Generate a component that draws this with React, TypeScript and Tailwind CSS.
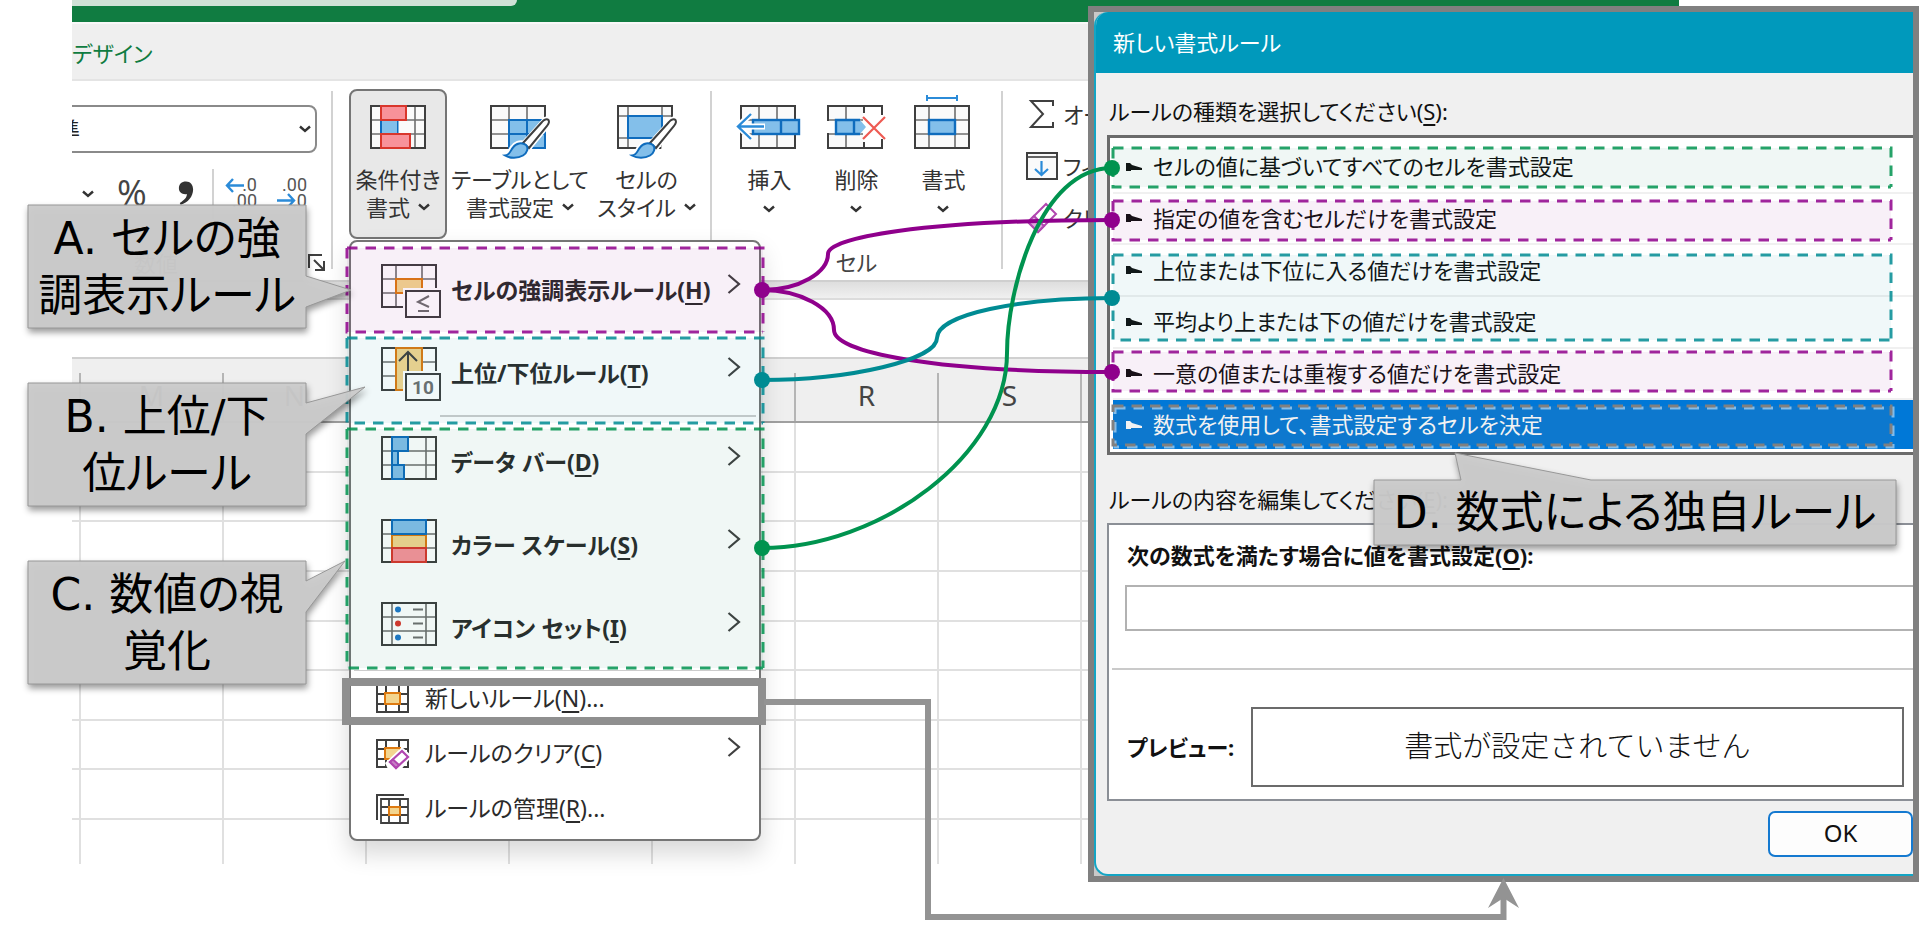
import type { ReactNode } from "react";

const UI = "font-['Noto_Sans','Noto_Sans_CJK_JP',sans-serif] [font-feature-settings:'palt']";

const DARK = "#3f3f3f";
const MID = "#6f6f6f";
const BLUE = "#0f6cbd";
const SKY = "#83bfea";
const ORANGE = "#de7a10";
const SAND = "#f3d58f";
const RED = "#d9362c";
const PINK = "#f8929a";

function Down() {
  return (
    <svg width="12" height="8" viewBox="0 0 12 8" fill="none" className="inline-block shrink-0">
      <path d="M1 1.500 6 6 11 1.500" stroke="#333" strokeWidth="2.400" />
    </svg>
  );
}

function Right() {
  return (
    <svg width="14" height="34" viewBox="0 0 14 34" fill="none" className="shrink-0">
      <path d="M1.500 1 12 10 1.500 19" stroke="#404040" strokeWidth="2.200" />
    </svg>
  );
}

function Icon({ children, h = 54 }: { children: ReactNode; h?: number }) {
  return (
    <svg width="60" height={h} viewBox={`0 0 60 ${h}`} fill="none" className="shrink-0 overflow-visible">
      {children}
    </svg>
  );
}

function Grid({ cols, fill = "#fafafa" }: { cols: number[]; fill?: string }) {
  return (
    <g>
      <rect x="1" y="1" width="54" height="42" fill={fill} />
      <path d={"M1 15H55M1 29H55" + cols.map((c) => `M${c} 1V43`).join("")} stroke={MID} strokeWidth="1.600" />
      <rect x="1" y="1" width="54" height="42" stroke={DARK} strokeWidth="2" />
    </g>
  );
}

function Brush() {
  return (
    <g>
      <path d="M57 14C60 15 59 18 57 21L40 42C38 50 26 54 14 51C20 50 20 46 22 43C25 38 30 37 34 38L53 17C54 15 56 14 57 14Z" fill="#fff" stroke="#fff" strokeWidth="5" />
      <path d="M33 38 52 17C54 14.500 57 13.500 58.500 15C59.500 16.500 58.500 19 57 21L39 43Z" fill="#fff" stroke={DARK} strokeWidth="2" />
      <path d="M15 50.500C20 50 20 46 23 42.500C26 38 32 37 36 40C39 43 37 48 33 50.500C28 53.500 20 53.500 15 50.500Z" fill={SKY} stroke={BLUE} strokeWidth="2" />
    </g>
  );
}

const ConditionalIcon = () => (
  <Icon>
    <g transform="translate(2 0)">
      <Grid cols={[11, 45]} />
      <rect x="11" y="1" width="25" height="14" fill={PINK} stroke={RED} strokeWidth="2" />
      <rect x="11" y="29" width="29" height="14" fill={PINK} stroke={RED} strokeWidth="2" />
      <rect x="28" y="16" width="16" height="12" fill="#fafafa" />
      <path d="M11 16V28M27.500 16V28" stroke={BLUE} strokeWidth="2" />
      <rect x="12" y="16" width="15" height="12" fill={SKY} />
    </g>
  </Icon>
);

const TableIcon = () => (
  <Icon>
    <Grid cols={[19, 37]} />
    <path d="M19 15H55V43H19Z" fill={SKY} stroke={BLUE} strokeWidth="2" />
    <path d="M19 29H55M37 15V43" stroke={BLUE} strokeWidth="2" />
    <Brush />
  </Icon>
);

const StyleIcon = () => (
  <Icon>
    <rect x="1" y="1" width="54" height="42" fill="#fafafa" />
    <path d="M1 11H55M1 33H55M11 1V43M45 1V43" stroke={MID} strokeWidth="1.600" />
    <rect x="1" y="1" width="54" height="42" stroke={DARK} strokeWidth="2" />
    <rect x="11" y="11" width="34" height="22" fill={SKY} stroke={BLUE} strokeWidth="2" />
    <path d="M48 13H58V46H44Z" fill="#fff" />
    <Brush />
  </Icon>
);

const InsertIcon = () => (
  <Icon>
    <Grid cols={[19, 37]} />
    <rect x="13" y="15" width="46" height="14" fill={SKY} stroke={BLUE} strokeWidth="2.400" />
    <path d="M41 15V29" stroke={BLUE} strokeWidth="2.400" />
    <path d="M11 9-2 21 11 34M-2 21.500H25" stroke="#fff" strokeWidth="6" />
    <path d="M11 9-2 21.500 11 34M-2 21.500H24" stroke="#2b8bd8" strokeWidth="2.400" />
  </Icon>
);

const DeleteIcon = () => (
  <Icon>
    <Grid cols={[19, 37]} />
    <path d="M-1 16H10V28H-1Z" fill="#fff" />
    <path d="M36 0H60V44H36Z" fill="#fff" />
    <path d="M36 1H55V10M36 43H55V34M37 1V8M37 43V37" stroke={DARK} strokeWidth="2" />
    <path d="M9 15H33L39 22 33 29H9Z" fill={SKY} />
    <path d="M33 15H9V29H33M27 15V29" stroke={BLUE} strokeWidth="2.400" />
    <path d="M36 12 58 34M58 12 36 34" stroke="#ee5a52" strokeWidth="2.200" />
  </Icon>
);

const FormatIcon = () => (
  <Icon>
    <Grid cols={[15, 41]} />
    <rect x="15" y="15" width="26" height="14" fill={SKY} stroke={BLUE} strokeWidth="2.400" />
    <path d="M13-7H43M13-10V-4M43-10V-4" stroke="#2b8bd8" strokeWidth="2" />
  </Icon>
);

const HighlightIcon = () => (
  <Icon>
    <Grid cols={[15, 41]} fill="none" />
    <rect x="15" y="15" width="26" height="14" fill={SAND} stroke={ORANGE} strokeWidth="2" />
    <rect x="22" y="24" width="40" height="32" fill="#ffffff" />
    <rect x="25" y="27" width="34" height="26" fill="#ffffff" stroke={DARK} strokeWidth="2" />
    <path d="M48 32 37 38 48 43M37 47H48" stroke={MID} strokeWidth="2" />
  </Icon>
);

const TopIcon = () => (
  <Icon>
    <Grid cols={[15, 41]} fill="none" />
    <rect x="15" y="1" width="26" height="42" fill={SAND} stroke={ORANGE} strokeWidth="2" />
    <path d="M18 14 27 5 36 14M27 6V26" stroke={DARK} strokeWidth="2" />
    <rect x="22" y="24" width="40" height="32" fill="#ffffff" />
    <rect x="25" y="27" width="34" height="26" fill="#ffffff" stroke={DARK} strokeWidth="2" />
    <text x="42" y="47" textAnchor="middle" fontSize="19" fill={MID} fontFamily="Roboto, sans-serif">10</text>
  </Icon>
);

const BarIcon = () => (
  <Icon>
    <Grid cols={[11, 45]} fill="none" />
    <path d="M11 1H27V15H17V29H23V43H11Z" fill={SKY} stroke={BLUE} strokeWidth="2" />
    <path d="M11 15H17M11 29H17" stroke={BLUE} strokeWidth="2" />
  </Icon>
);

const ScaleIcon = () => (
  <Icon>
    <Grid cols={[11, 45]} fill="none" />
    <rect x="11" y="16" width="34" height="13" fill={SAND} stroke={ORANGE} strokeWidth="2" />
    <rect x="11" y="1" width="34" height="14" fill={SKY} stroke={BLUE} strokeWidth="2" />
    <rect x="11" y="29" width="34" height="14" fill={PINK} stroke={RED} strokeWidth="2" />
  </Icon>
);

const SetIcon = () => (
  <Icon>
    <Grid cols={[11, 45]} fill="none" />
    <circle cx="17" cy="7.500" r="3" fill="#1f78c8" />
    <circle cx="17" cy="21.500" r="3" fill={RED} />
    <circle cx="17" cy="35.500" r="3" fill="#1f78c8" />
    <path d="M32 7.500H42M32 21.500H42M32 35.500H42" stroke={MID} strokeWidth="1.800" />
  </Icon>
);

function SmallGrid({ children }: { children: ReactNode }) {
  return (
    <svg width="34" height="30" viewBox="0 0 34 30" fill="none" className="shrink-0 overflow-visible">
      {children}
    </svg>
  );
}

const NewRuleIcon = () => (
  <SmallGrid>
    <path d="M1 1H32V28H1ZM10 1V28M23 1V28M1 10H32M1 20H32" stroke={DARK} strokeWidth="2" />
    <rect x="9" y="9" width="15" height="11" fill={SAND} stroke={ORANGE} strokeWidth="2" />
  </SmallGrid>
);

const ClearRuleIcon = () => (
  <SmallGrid>
    <path d="M1 1H32V28H1ZM10 1V28M23 1V28M1 10H32M1 20H32" stroke={DARK} strokeWidth="2" />
    <rect x="9" y="9" width="15" height="11" fill={SAND} stroke={ORANGE} strokeWidth="2" />
    <path d="M26 8 36 17 24 32H13L9 24Z" fill="#fff" />
    <path d="M26 12 32 18 20 29 14 23Z" stroke="#b146b0" strokeWidth="2.200" />
    <path d="M17 20.500 14 23 20 29 23 26Z" fill="#c77fc6" stroke="#b146b0" strokeWidth="2" />
  </SmallGrid>
);

const ManageRuleIcon = () => (
  <SmallGrid>
    <path d="M1 26V1H28" stroke={DARK} strokeWidth="2" />
    <path d="M5 5H32V29H5ZM13 5V29M24 5V29M5 13H32M5 21H32" stroke={DARK} strokeWidth="1.800" />
    <rect x="13" y="13" width="11" height="8" fill={SAND} stroke={ORANGE} strokeWidth="2" />
  </SmallGrid>
);

function RibbonButton({
  icon,
  lines,
  inline,
  className,
}: {
  icon: ReactNode;
  lines: [string, string?];
  inline?: boolean;
  className: string;
}) {
  return (
    <button className={"flex h-[150px] flex-col items-center gap-[6px] pt-[14px] text-[22px] leading-[28px] whitespace-nowrap text-[#333] " + className}>
      {icon}
      <span className="flex flex-col items-center">
        <span>{lines[0]}</span>
        <span className={"flex h-[28px] items-center gap-2" + (inline ? "" : " pt-1")}>
          {lines[1]}
          <Down />
        </span>
      </span>
    </button>
  );
}

function Separator() {
  return <div className="mt-[2px] h-[178px] w-[2px] shrink-0 bg-[#d2d2d2]" />;
}

function Ribbon() {
  return (
    <div className="flex h-[201px] items-start border-b-2 border-[#cfcfcf] bg-white pt-[8px]">
      <div className="flex w-[259px] shrink-0 flex-col overflow-hidden pt-[16px]">
        <div className="relative -ml-[48px] w-[293px]">
          <select aria-label="表示形式" className="h-[48px] w-full appearance-none rounded-lg border-2 border-[#8a8a8a] bg-white pl-[10px] text-[22px] text-[#222]">
            <option>標準</option>
          </select>
          <span className="pointer-events-none absolute top-[10px] right-[6px]"><Down /></span>
        </div>
        <div className="flex h-[66px] items-start pt-[16px] pl-[6px] text-[#444]">
          <button aria-label="通貨" className="flex h-[50px] w-[20px] items-center justify-center"><Down /></button>
          <button className="ml-[16px] w-[36px] text-center font-['Open_Sans',sans-serif] text-[36px] leading-[48px]">%</button>
          <button aria-label="桁区切り" className="ml-[26px] flex h-[50px] w-[20px] items-center justify-center">
            <svg width="16" height="26" viewBox="0 0 18 28"><path d="M9 0C14 0 17 4 17 9C17 17 11 24 3 26L2 24C7 21 10 18 10 14C5 15 1 12 1 7.500C1 3 4 0 9 0Z" fill="#333" /></svg>
          </button>
          <div className="ml-[16px] h-[50px] w-[2px] bg-[#d2d2d2]" />
          <button aria-label="小数点以下の表示桁数を増やす" className="ml-[10px]">
            <svg width="34" height="42" viewBox="0 0 34 42" fill="none" fontFamily="Roboto, sans-serif" fontSize="18">
              <path d="M9 10 3 16.500 9 23M3 16.500H20" stroke="#2b8bd8" strokeWidth="2.400" />
              <text x="33" y="22" textAnchor="end" fill="#555">.0</text>
              <text x="33" y="38" textAnchor="end" fill="#555">.00</text>
            </svg>
          </button>
          <button aria-label="小数点以下の表示桁数を減らす" className="ml-[16px]">
            <svg width="34" height="42" viewBox="0 0 34 42" fill="none" fontFamily="Roboto, sans-serif" fontSize="18">
              <path d="M14 25 20 31.500 14 38M3 31.500H20" stroke="#2b8bd8" strokeWidth="2.400" />
              <text x="33" y="22" textAnchor="end" fill="#555">.00</text>
              <text x="33" y="38" textAnchor="end" fill="#555">.0</text>
            </svg>
          </button>
        </div>
        <div className="flex items-center justify-between pt-[24px] pr-[5px] pl-[62px] text-[22px] leading-[40px] text-[#555]">
          数値
          <svg width="18" height="18" viewBox="0 0 18 18" fill="none"><path d="M1 14V1H14M6 6 15 15M16 7V16H7" stroke={DARK} strokeWidth="2" /></svg>
        </div>
      </div>
      <Separator />
      <div className="flex pr-[10px] pl-[16px]">
        <RibbonButton icon={<ConditionalIcon />} lines={["条件付き", "書式"]} inline className="w-[98px] rounded-lg border-2 border-[#757575] bg-[#e8e8e8]" />
        <RibbonButton icon={<TableIcon />} lines={["テーブルとして", "書式設定"]} inline className="w-[146px] border-2 border-transparent" />
        <RibbonButton icon={<StyleIcon />} lines={["セルの", "スタイル"]} inline className="w-[107px] border-2 border-transparent" />
      </div>
      <Separator />
      <div className="flex flex-col items-center px-[14px]">
        <div className="flex">
          <RibbonButton icon={<InsertIcon />} lines={["挿入"]} className="w-[87px] border-2 border-transparent" />
          <RibbonButton icon={<DeleteIcon />} lines={["削除"]} className="w-[87px] border-2 border-transparent" />
          <RibbonButton icon={<FormatIcon />} lines={["書式"]} className="w-[87px] border-2 border-transparent" />
        </div>
        <div className="pt-[8px] text-[22px] leading-[30px] text-[#444]">セル</div>
      </div>
      <Separator />
      <div className="flex flex-col gap-[12px] pt-[5px] pl-[23px] text-[22px] leading-[40px] whitespace-nowrap text-[#333]">
        <button className="flex items-center gap-[5px]">
          <svg width="32" height="32" viewBox="0 0 32 32" fill="none"><path d="M27 8V3H5L17 16 5 29H27V24" stroke={DARK} strokeWidth="2" /></svg>
          オート SUM
        </button>
        <button className="flex items-center gap-[5px]">
          <svg width="32" height="28" viewBox="0 0 32 28" fill="none">
            <rect x="1" y="1" width="30" height="26" fill="#fafafa" stroke={DARK} strokeWidth="2" />
            <path d="M1 5H31" stroke={DARK} strokeWidth="1.600" />
            <path d="M15.500 9V23M9 17 15.500 23 22 17" stroke="#2b8bd8" strokeWidth="2.200" />
          </svg>
          フィル
        </button>
        <button className="flex items-center gap-[5px]">
          <svg width="32" height="32" viewBox="0 0 32 32" fill="none">
            <path d="M20 2 30 12 12 30 2 20Z" fill="#fff" stroke="#b146b0" strokeWidth="2" />
            <path d="M8 14 2 20 12 30 18 24Z" fill="#dda8dc" stroke="#b146b0" strokeWidth="2" />
          </svg>
          クリア
        </button>
      </div>
    </div>
  );
}

const COLUMNS = ["M", "N", "O", "P", "Q", "R", "S", "T", "U", "V", "W"];
const ROWS = ["h-[50px]", "h-[49px]", "h-[50px]", "h-[50px]", "h-[49px]", "h-[50px]", "h-[49px]", "h-[50px]"];

function Sheet() {
  return (
    <table className="w-full table-fixed border-separate border-spacing-0 border-t-2 border-[#d0d0d0] bg-white">
      <thead>
        <tr className="h-[64px] bg-[#efefef]">
          <th className="w-[9px] border-b-2 border-[#a0a0a0] p-0"><div className="mt-[14px] h-[48px] border-r-2 border-[#b5b5b5]" /></th>
          {COLUMNS.map((c) => (
            <th key={c} className="w-[143px] border-b-2 border-[#a0a0a0] p-0 text-[28px] leading-[44px] font-normal text-[#444]">
              <div className="mt-[14px] h-[48px] border-r-2 border-[#b5b5b5]">{c}</div>
            </th>
          ))}
          <th className="border-b-2 border-[#a0a0a0] p-0" />
        </tr>
      </thead>
      <tbody>
        {ROWS.map((h, i) => (
          <tr key={i} className={h}>
            <td className="border-r-2 border-b-2 border-[#e0e0e0] p-0" />
            {COLUMNS.map((c) => (
              <td key={c} className="border-r-2 border-b-2 border-[#e0e0e0] p-0" />
            ))}
            <td className="border-b-2 border-[#e0e0e0] p-0" />
          </tr>
        ))}
        <tr className="h-[44px]">
          <td className="border-r-2 border-[#e0e0e0] p-0" />
          {COLUMNS.map((c) => (
            <td key={c} className="border-r-2 border-[#e0e0e0] p-0" />
          ))}
          <td className="p-0" />
        </tr>
      </tbody>
    </table>
  );
}

function Workbook() {
  return (
    <main className="mr-[241px] ml-[72px] flex flex-col">
      <div className="h-[22px] bg-[#107c41]">
        <div className="h-[6px] w-[445px] rounded-br-md bg-[#cfe2d6]" />
      </div>
      <nav className="h-[59px] overflow-hidden border-t-2 border-b-2 border-t-[#f8f8f8] border-b-[#e4e4e4] bg-[#efefef]">
        <a href="#design" className="block text-[22px] leading-[58px] text-[#107c41]">デザイン</a>
      </nav>
      <Ribbon />
      <div className="h-[18px] border-b-2 border-[#dcdcdc] bg-linear-to-b from-[#dedede] to-[#f0f0f0]" />
      <div className="h-[57px] bg-white" />
      <Sheet />
    </main>
  );
}

function MenuText({ text, mnemonic, tail = "" }: { text: string; mnemonic: string; tail?: string }) {
  return (
    <span>
      {text}(<span className="underline underline-offset-4">{mnemonic}</span>){tail}
    </span>
  );
}

const LARGE = [
  { icon: <HighlightIcon />, text: "セルの強調表示ルール", key: "H" },
  { icon: <TopIcon />, text: "上位/下位ルール", key: "T" },
  { icon: <BarIcon />, text: "データ バー", key: "D" },
  { icon: <ScaleIcon />, text: "カラー スケール", key: "S" },
  { icon: <SetIcon />, text: "アイコン セット", key: "I" },
];

const SMALL = [
  { icon: <NewRuleIcon />, text: "新しいルール", key: "N", tail: "...", more: false },
  { icon: <ClearRuleIcon />, text: "ルールのクリア", key: "C", tail: "", more: true },
  { icon: <ManageRuleIcon />, text: "ルールの管理", key: "R", tail: "...", more: false },
];

function Menu() {
  return (
    <div role="menu" className="absolute top-[240px] left-[349px] flex w-[412px] flex-col rounded-lg border-2 border-[#757575] bg-white pt-[7px] pb-[3px] whitespace-nowrap text-[#2b2b2b] shadow-[0_12px_24px_rgba(0,0,0,0.16)]">
      {LARGE.map((m, i) => (
        <div key={m.key} className="flex flex-col">
          <button role="menuitem" className="flex h-[83px] items-center gap-[10px] pr-[18px] pl-[30px] text-left text-[23px] font-bold">
            {m.icon}
            <span className="flex-1"><MenuText text={m.text} mnemonic={m.key} /></span>
            <Right />
          </button>
          {i === 1 && <div className="mr-[3px] mb-[4px] ml-[89px] h-[2px] bg-[#cdcdcd]" />}
        </div>
      ))}
      <div className="mx-[3px] h-px bg-[#cdcdcd]" />
      {SMALL.map((m) => (
        <button key={m.key} role="menuitem" className="flex h-[55px] items-center gap-[15px] pr-[18px] pl-[25px] text-left text-[23px]">
          {m.icon}
          <span className="flex-1"><MenuText text={m.text} mnemonic={m.key} tail={m.tail} /></span>
          {m.more && <Right />}
        </button>
      ))}
    </div>
  );
}

const RULES = [
  "セルの値に基づいてすべてのセルを書式設定",
  "指定の値を含むセルだけを書式設定",
  "上位または下位に入る値だけを書式設定",
  "平均より上または下の値だけを書式設定",
  "一意の値または重複する値だけを書式設定",
  "数式を使用して、書式設定するセルを決定",
];

function Dialog() {
  return (
    <section aria-label="新しい書式ルール" className="absolute top-[6px] left-[1088px] w-[831px] border-6 border-[#808080] bg-[#c9c9c9] text-[22px] text-[#111]">
      <div className="flex h-[864px] flex-col overflow-hidden rounded-l-[14px] border-b-2 border-l-2 border-[#14a5c4] bg-[#f0f0f0]">
        <h1 className="h-[61px] shrink-0 bg-[#0099bc] pl-[17px] text-[22px] leading-[60px] text-white">新しい書式ルール</h1>
        <div className="flex flex-1 flex-col pl-[11px]">
          <div id="kinds" className="h-[62px] pt-[21px] pl-[2px] leading-[34px]">
            ルールの種類を選択してください(<span className="underline underline-offset-4">S</span>):
          </div>
          <ul role="listbox" aria-labelledby="kinds" className="grid h-[320px] grid-rows-6 border-y-3 border-l-3 border-[#6b6b6b] bg-white pt-[4px]">
            {RULES.map((r, i) => (
              <li
                key={r}
                role="option"
                aria-selected={i === 5}
                className={"ml-[3px] flex items-center gap-[10px] pl-[13px] " + (i === 5 ? "mb-[3px] bg-[#0078d7] text-white" : "border-b-2 border-[#f0f0f0]")}
              >
                <svg width="17" height="16" viewBox="0 0 17 16" fill="currentColor"><path d="M0 4H4L6 6 16 9V11H5V12H0Z" /></svg>
                {r}
              </li>
            ))}
          </ul>
          <div className="h-[68px] pt-[27px] pl-[2px] leading-[34px]">
            ルールの内容を編集してください(<span className="underline underline-offset-4">E</span>):
          </div>
          <div className="flex h-[278px] flex-col border-y-2 border-l-2 border-[#8b8f96] bg-white">
            <label htmlFor="formula" className="h-[60px] pt-[13px] pl-[18px] leading-[34px] font-bold">
              次の数式を満たす場合に値を書式設定(<span className="underline underline-offset-4">O</span>):
            </label>
            <input id="formula" type="text" className="ml-[16px] h-[46px] border-2 border-r-0 border-[#b2b2b2] bg-white px-2" />
            <div className="mt-[37px] ml-[3px] h-[2px] bg-[#cacaca]" />
            <div className="mt-[37px] flex h-[80px] items-center pr-[9px] pl-[18px]">
              <span className="w-[124px] shrink-0 font-bold">プレビュー:</span>
              <output className="flex h-full flex-1 items-center justify-center border-2 border-[#6b6b6b] pb-[4px] font-['Noto_Sans_CJK_JP',sans-serif] text-[29px] font-light [font-feature-settings:normal]">
                書式が設定されていません
              </output>
            </div>
          </div>
          <div className="flex justify-end pt-[10px]">
            <button className="h-[46px] w-[145px] rounded-[7px] border-2 border-[#1479d0] bg-[#fdfdfd] pb-[2px] text-[24px]">OK</button>
          </div>
        </div>
      </div>
    </section>
  );
}

const PURPLE = "#8f008c";
const TEAL = "#008b93";
const GREEN = "#00934f";
const TINT = "#007850";

const REGIONS = [
  { x: 347, y: 248, w: 416, h: 84, c: PURPLE, tint: PURPLE },
  { x: 347, y: 338, w: 416, h: 85, c: TEAL, tint: TEAL },
  { x: 347, y: 429, w: 416, h: 239, c: GREEN, tint: TINT },
  { x: 1113, y: 148, w: 778, h: 39, c: GREEN, tint: TINT },
  { x: 1113, y: 201, w: 778, h: 39, c: PURPLE, tint: PURPLE },
  { x: 1113, y: 255, w: 778, h: 85, c: TEAL, tint: TEAL },
  { x: 1113, y: 352, w: 778, h: 39, c: PURPLE, tint: PURPLE },
];

function Annotations() {
  return (
    <svg width="1920" height="937" viewBox="0 0 1920 937" fill="none" className="pointer-events-none absolute top-0 left-0" aria-hidden="true">
      {REGIONS.map((r, i) => (
        <g key={i}>
          <rect x={r.x} y={r.y} width={r.w} height={r.h} fill={r.tint} fillOpacity="0.06" />
          <path
            d={`M${r.x} ${r.y}h${r.w}v${r.h}M${r.x} ${r.y}v${r.h}h${r.w}`}
            stroke={r.c}
            strokeOpacity="0.85"
            strokeWidth="3"
            strokeDasharray="10.500 8"
          />
        </g>
      ))}
      <rect x="1113" y="406" width="778" height="39" fill="#808080" fillOpacity="0.1" />
      <rect x="1115" y="408" width="778" height="39" stroke="#fff" strokeOpacity="0.5" strokeWidth="3" strokeDasharray="10.500 8" />
      <rect x="1113" y="406" width="778" height="39" stroke="#808080" strokeWidth="3" strokeDasharray="10.500 8" />

      <rect x="346" y="682" width="416" height="39" stroke="#8f8f8f" strokeWidth="8" />
      <path d="M764 702H928V917H1503.500V895" stroke="#939393" strokeWidth="6" />
      <path d="M1503.500 878 1519 908 1503.500 898 1488 908Z" fill="#939393" />

      <g strokeWidth="4">
        <path d="M762 290C800 290 828 272 828 254C828 238 920 220 1112 220" stroke={PURPLE} />
        <path d="M762 290C800 290 834 308 834 330C834 352 930 372 1112 372" stroke={PURPLE} />
        <path d="M762 380C850 380 937 360 937 338C937 314 1020 298 1112 298" stroke={TEAL} />
        <path d="M762 548C880 548 1007 455 1007 353C1007 290 1040 168 1112 168" stroke={GREEN} />
      </g>
      <circle cx="762" cy="290" r="8" fill={PURPLE} />
      <circle cx="762" cy="380" r="8" fill={TEAL} />
      <circle cx="762" cy="548" r="8" fill={GREEN} />
      <circle cx="1112" cy="168" r="8" fill={GREEN} />
      <circle cx="1112" cy="220" r="8" fill={PURPLE} />
      <circle cx="1112" cy="298" r="8" fill={TEAL} />
      <circle cx="1112" cy="372" r="8" fill={PURPLE} />
    </svg>
  );
}

function Callout({ outline, className, children }: { outline: string; className: string; children: ReactNode }) {
  return (
    <aside className={"absolute flex items-center justify-center text-center font-['DejaVu_Sans','Noto_Sans_CJK_JP',sans-serif] text-[44px] leading-[57px] whitespace-nowrap text-black " + className}>
      <svg className="absolute inset-0 h-full w-full overflow-visible drop-shadow-[1px_4px_3px_rgba(0,0,0,0.4)]" fill="none" aria-hidden="true">
        <path d={outline} fill="#cbcbcb" fillOpacity="0.96" stroke="#979797" />
      </svg>
      <p className="relative">{children}</p>
    </aside>
  );
}

export default function App() {
  return (
    <div className={"relative min-h-screen overflow-hidden bg-white " + UI}>
      <Workbook />
      <Menu />
      <Dialog />
      <Annotations />
      <Callout className="top-[205px] left-[28px] h-[123px] w-[278px]" outline="M0 0H278V71L323 85L278 102V123H0Z">
        A. セルの強<br />調表示ルール
      </Callout>
      <Callout className="top-[383px] left-[28px] h-[123px] w-[278px]" outline="M0 0H278V20L337 4L278 51V123H0Z">
        B. 上位/下<br />位ルール
      </Callout>
      <Callout className="top-[561px] left-[28px] h-[123px] w-[278px]" outline="M0 0H278V20L317 0L278 51V123H0Z">
        C. 数値の視<br />覚化
      </Callout>
      <Callout className="top-[480px] left-[1374px] h-[65px] w-[522px]" outline="M0 0H87L81-27L217 0H522V65H0Z">
        D. 数式による独自ルール
      </Callout>
    </div>
  );
}
